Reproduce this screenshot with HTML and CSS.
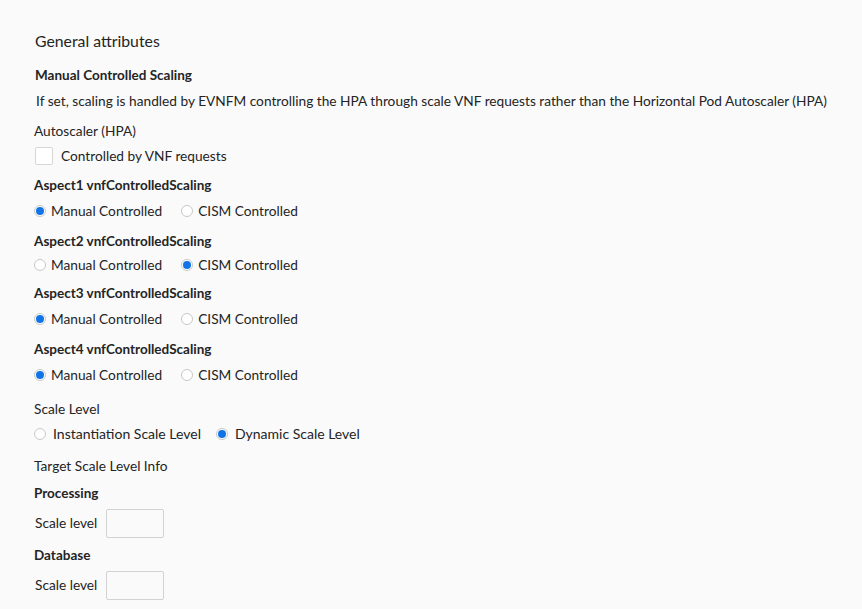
FILE: index.html
```html
<!DOCTYPE html>
<html>
<head>
<meta charset="utf-8">
<link rel="stylesheet" href="styles.css">
</head>
<body>
<div class="page">
  <div class="title">General attributes</div>
  <div class="heading h-first">Manual Controlled Scaling</div>
  <div class="text desc">If set, scaling is handled by EVNFM controlling the HPA through scale VNF requests rather than the Horizontal Pod Autoscaler (HPA)</div>
  <div class="text label-autoscaler">Autoscaler (HPA)</div>
  <label class="check-row">
    <span class="checkbox"></span>
    <span class="text">Controlled by VNF requests</span>
  </label>

  <div class="group">
    <div class="heading">Aspect1 vnfControlledScaling</div>
    <div class="radios">
      <span class="opt"><span class="radio on"></span><span class="text">Manual Controlled</span></span>
      <span class="opt"><span class="radio"></span><span class="text">CISM Controlled</span></span>
    </div>
  </div>
  <div class="group">
    <div class="heading">Aspect2 vnfControlledScaling</div>
    <div class="radios tight">
      <span class="opt"><span class="radio"></span><span class="text">Manual Controlled</span></span>
      <span class="opt"><span class="radio on"></span><span class="text">CISM Controlled</span></span>
    </div>
  </div>
  <div class="group g3">
    <div class="heading">Aspect3 vnfControlledScaling</div>
    <div class="radios">
      <span class="opt"><span class="radio on"></span><span class="text">Manual Controlled</span></span>
      <span class="opt"><span class="radio"></span><span class="text">CISM Controlled</span></span>
    </div>
  </div>
  <div class="group">
    <div class="heading">Aspect4 vnfControlledScaling</div>
    <div class="radios">
      <span class="opt"><span class="radio on"></span><span class="text">Manual Controlled</span></span>
      <span class="opt"><span class="radio"></span><span class="text">CISM Controlled</span></span>
    </div>
  </div>

  <div class="group scale">
    <div class="text">Scale Level</div>
    <div class="radios wide">
      <span class="opt"><span class="radio"></span><span class="text">Instantiation Scale Level</span></span>
      <span class="opt"><span class="radio on"></span><span class="text">Dynamic Scale Level</span></span>
    </div>
  </div>

  <div class="text target">Target Scale Level Info</div>
  <div class="heading sub">Processing</div>
  <div class="field-row">
    <span class="text">Scale level</span>
    <span class="input"></span>
  </div>
  <div class="heading sub">Database</div>
  <div class="field-row">
    <span class="text">Scale level</span>
    <span class="input"></span>
  </div>
</div>
</body>
</html>
```

FILE: styles.css
```css
html, body {
  margin: 0;
  padding: 0;
  background: #fafafa;
}
body {
  font-family: "Lato", "Liberation Sans", sans-serif;
  color: #242424;
  font-size: 13.7px;
}
.page {
  padding: 31px 0 0 34px;
}
.title {
  font-size: 15.8px;
  line-height: 20px;
  padding-left: 1px;
}
.heading {
  font-weight: 700;
  font-size: 13.5px;
  line-height: 20px;
}
.h-first {
  margin-top: 14px;
  padding-left: 1px;
}
.text {
  line-height: 20px;
  font-size: 13.7px;
}
.desc {
  margin-top: 6px;
  padding-left: 2px;
}
.label-autoscaler {
  margin-top: 10px;
}
.check-row {
  display: flex;
  align-items: center;
  gap: 8px;
  margin-top: 6px;
  height: 18px;
  padding-left: 1px;
}
.checkbox {
  width: 16px;
  height: 16px;
  border: 1px solid #d6d6d6;
  border-radius: 2px;
  background: #fff;
}
.group {
  margin-top: 10px;
}
.g3 {
  margin-top: 8px;
}
.radios {
  display: flex;
  gap: 19px;
  margin-top: 6px;
  height: 20px;
  align-items: center;
}
.radios.tight {
  margin-top: 4px;
}
.opt {
  display: flex;
  align-items: center;
  gap: 5px;
}
.radio {
  width: 10px;
  height: 10px;
  border: 1px solid #c8c8c8;
  border-radius: 50%;
  background: #fff;
  position: relative;
  box-sizing: content-box;
}
.radio.on::after {
  content: "";
  position: absolute;
  left: 1px;
  top: 1px;
  width: 8px;
  height: 8px;
  border-radius: 50%;
  background: #1174e6;
}
.scale {
  margin-top: 14px;
}
.wide {
  gap: 15px;
  margin-top: 5px;
}
.wide .opt {
  gap: 7px;
}
.wide .text {
  font-size: 14px;
}
.target {
  margin-top: 12px;
}
.sub {
  margin-top: 7px;
}
.field-row {
  display: flex;
  align-items: center;
  gap: 9px;
  margin-top: 5px;
  height: 30px;
  padding-left: 1px;
}
.input {
  width: 56px;
  height: 27px;
  border: 1px solid #d2d2d2;
  border-radius: 2px;
  background: #fafafa;
}
```
